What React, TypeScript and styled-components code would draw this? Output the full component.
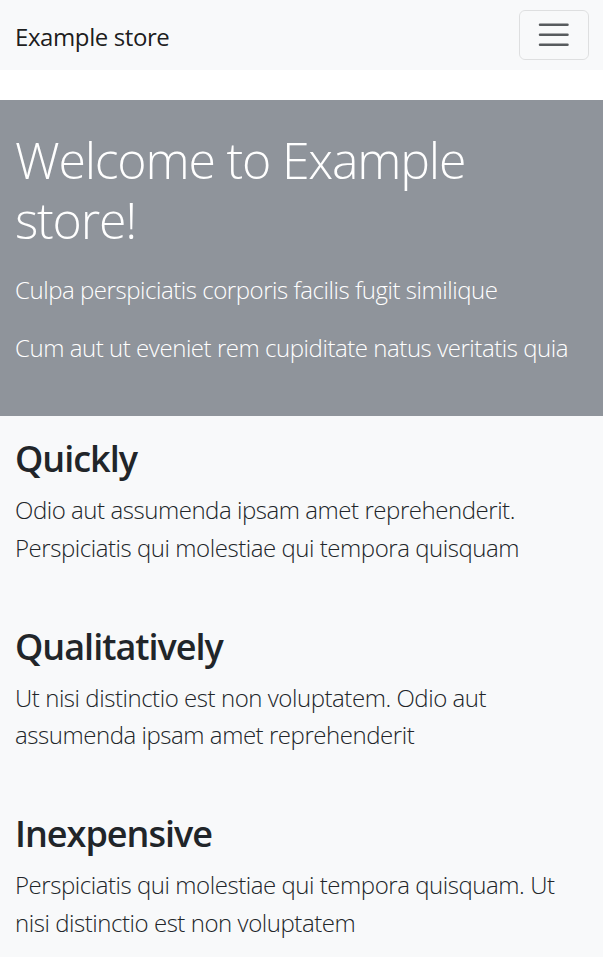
import React from "react";
import styled, { createGlobalStyle } from "styled-components";

const GlobalStyle = createGlobalStyle`
  html, body {
    margin: 0;
    padding: 0;
    background: #ffffff;
  }
  body {
    font-family: "Open Sans", "Noto Sans", "Liberation Sans", sans-serif;
    color: #212529;
    -webkit-font-smoothing: antialiased;
  }
  * { box-sizing: border-box; }
`;

const Navbar = styled.header`
  display: flex;
  align-items: center;
  justify-content: space-between;
  height: 70px;
  padding: 0 14px 0 15px;
  background: #f8f9fa;
`;

const Brand = styled.a`
  font-size: 24px;
  line-height: 37px;
  font-weight: 400;
  color: rgba(0, 0, 0, 0.9);
  text-decoration: none;
  letter-spacing: -0.4px;
  padding-top: 2px;
`;

const Toggler = styled.button`
  display: flex;
  align-items: center;
  justify-content: center;
  width: 70px;
  height: 50px;
  padding: 0;
  background: transparent;
  border: 1px solid rgba(0, 0, 0, 0.1);
  border-radius: 6px;
  cursor: pointer;
`;

const Hero = styled.section`
  margin-top: 30px;
  padding: 30px 15px;
  background: #8f949b;
  color: #ffffff;
`;

const HeroTitle = styled.h1`
  margin: 0 0 21px;
  font-size: 50px;
  line-height: 60px;
  font-weight: 300;
  letter-spacing: -1.2px;
`;

const Lead = styled.p`
  margin: 0 0 20px;
  font-size: 24px;
  line-height: 37.5px;
  font-weight: 300;
  letter-spacing: -0.45px;
`;

const Features = styled.main`
  display: flex;
  flex-direction: column;
  gap: 58.5px;
  padding: 21px 15px 40px;
  background: #f8f9fa;
`;

const Feature = styled.article`
  display: flex;
  flex-direction: column;
`;

const FeatureTitle = styled.h2`
  margin: 0 0 10px;
  font-size: 36px;
  line-height: 44px;
  font-weight: 600;
  letter-spacing: -1px;
  color: #212529;
`;

const FeatureText = styled.p`
  margin: 0;
  font-size: 24px;
  line-height: 37.5px;
  font-weight: 300;
  letter-spacing: -0.45px;
  color: #212529;
`;

const TogglerIcon = () => (
  <svg width="37.5" height="37.5" viewBox="0 0 30 30" aria-hidden="true">
    <path
      d="M4 7h22M4 15h22M4 23h22"
      stroke="rgba(33,37,41,0.75)"
      strokeWidth="2"
      strokeLinecap="round"
      strokeMiterlimit="10"
      fill="none"
    />
  </svg>
);

const features = [
  {
    title: "Quickly",
    text: "Odio aut assumenda ipsam amet reprehenderit. Perspiciatis qui molestiae qui tempora quisquam",
  },
  {
    title: "Qualitatively",
    text: "Ut nisi distinctio est non voluptatem. Odio aut assumenda ipsam amet reprehenderit",
  },
  {
    title: "Inexpensive",
    text: "Perspiciatis qui molestiae qui tempora quisquam. Ut nisi distinctio est non voluptatem",
  },
];

export default function App() {
  return (
    <>
      <GlobalStyle />
      <Navbar>
        <Brand href="#">Example store</Brand>
        <Toggler type="button" aria-label="Toggle navigation">
          <TogglerIcon />
        </Toggler>
      </Navbar>
      <Hero>
        <HeroTitle>Welcome to Example store!</HeroTitle>
        <Lead>Culpa perspiciatis corporis facilis fugit similique</Lead>
        <Lead>Cum aut ut eveniet rem cupiditate natus veritatis quia</Lead>
      </Hero>
      <Features>
        {features.map((f) => (
          <Feature key={f.title}>
            <FeatureTitle>{f.title}</FeatureTitle>
            <FeatureText>{f.text}</FeatureText>
          </Feature>
        ))}
      </Features>
    </>
  );
}
